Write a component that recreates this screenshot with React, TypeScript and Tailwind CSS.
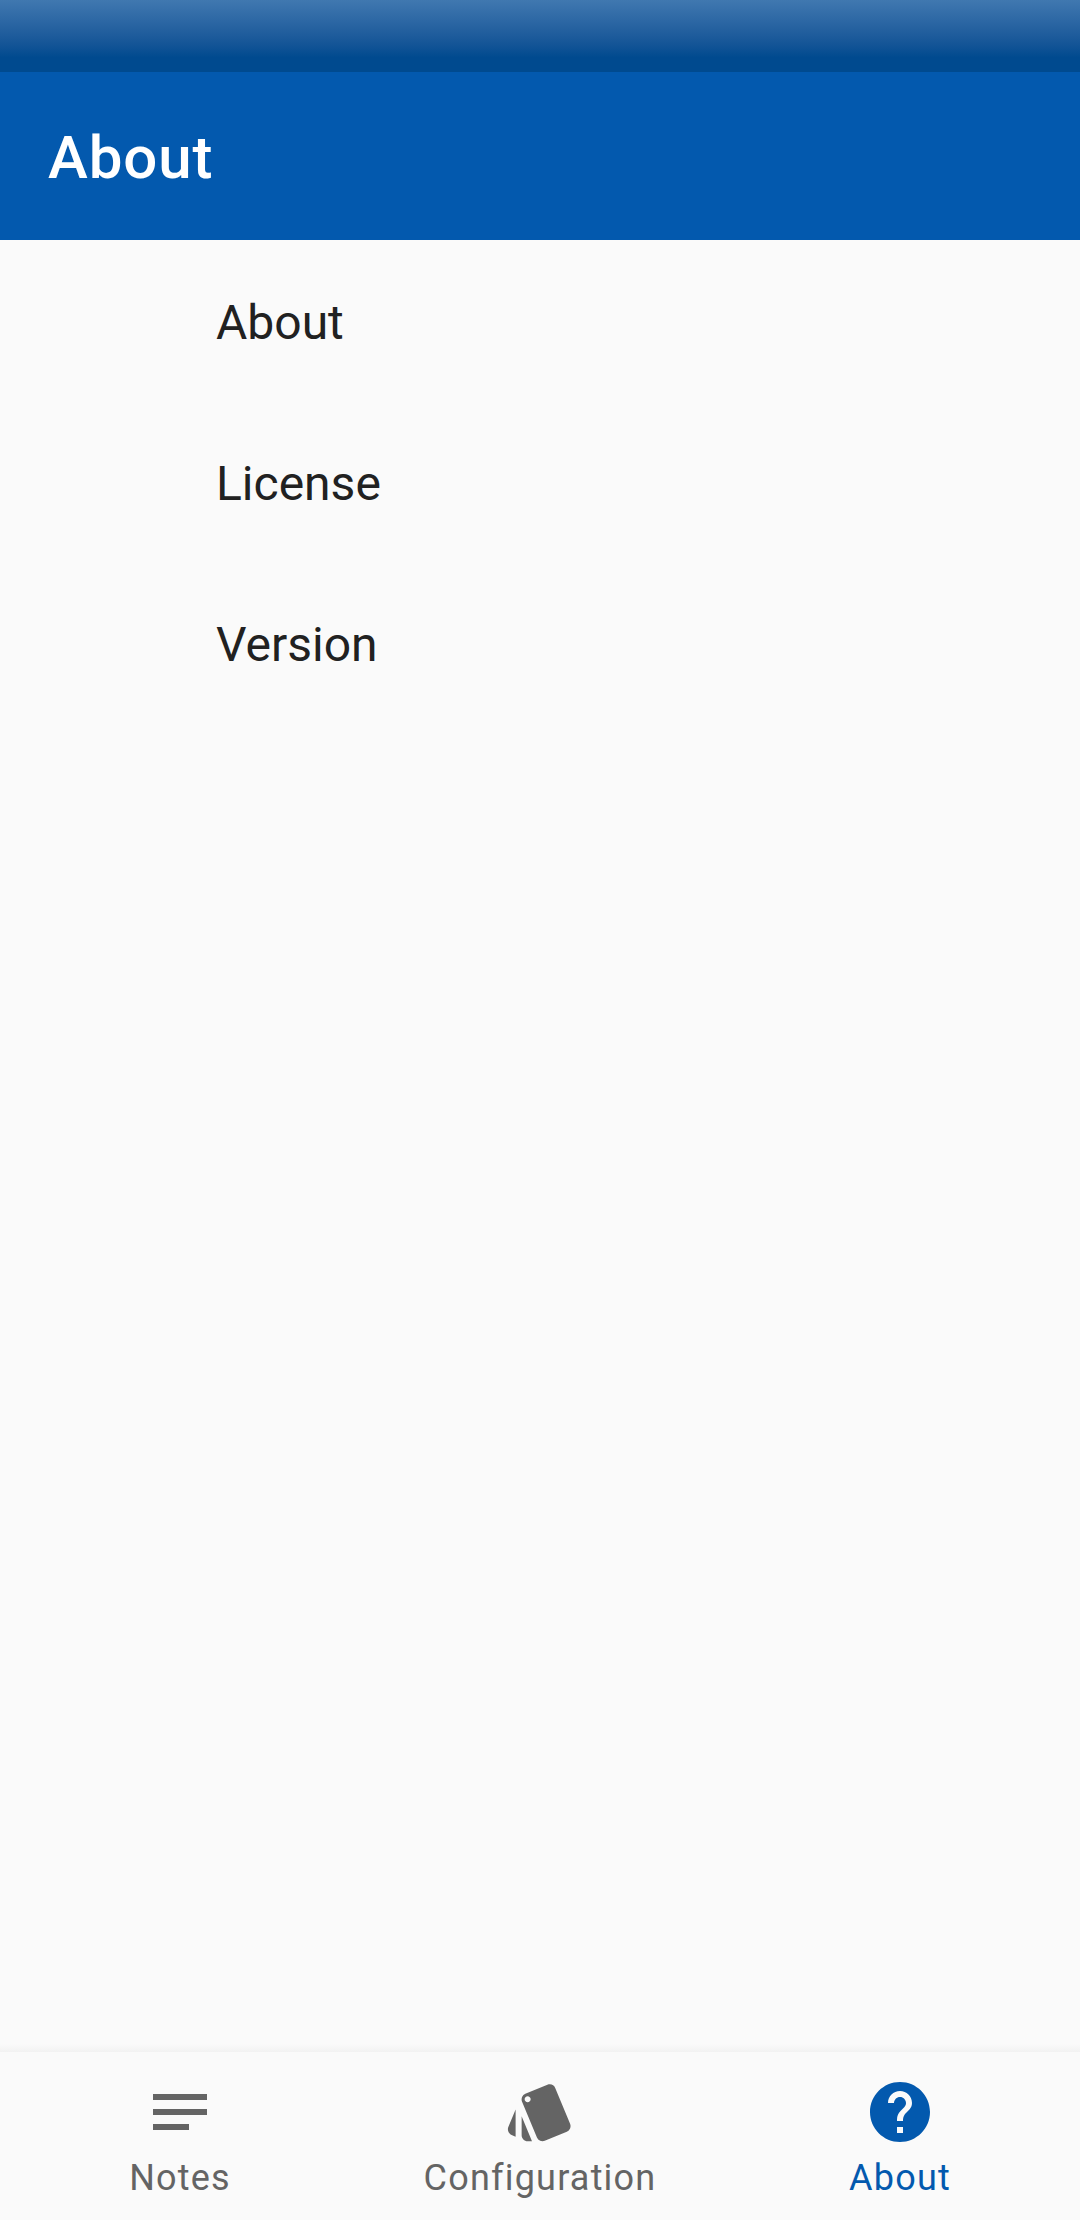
import { MdNotes, MdStyle, MdHelp } from "react-icons/md";

const rows = ["About", "License", "Version"];
const tabs = [
  { label: "Notes", Icon: MdNotes, active: false },
  { label: "Configuration", Icon: MdStyle, active: false },
  { label: "About", Icon: MdHelp, active: true },
];

export default function App() {
  return (
    <div className="flex h-[2220px] w-[1080px] flex-col overflow-hidden bg-[#fafafa] font-[Roboto,sans-serif]">
      <div className="h-[72px] shrink-0 bg-linear-to-b from-[#4078b0] to-[#004a8f] to-80%" />
      <header className="flex h-[168px] shrink-0 items-center bg-[#0359ae] pt-1 pl-12">
        <h1 className="text-[60px] leading-[70px] font-medium tracking-[0.9px] text-white">About</h1>
      </header>
      <main className="flex-1">
        {rows.map((r) => (
          <div key={r} className="flex h-[161px] items-center pt-1 pl-[216px] text-[48px] leading-[56px] text-[#212121]">{r}</div>
        ))}
      </main>
      <div className="h-2 shrink-0 bg-linear-to-b from-[#fafafa] to-[#f2f2f2]" />
      <nav className="grid h-[168px] shrink-0 grid-cols-3">
        {tabs.map(({ label, Icon, active }) => (
          <div key={label} className={`flex flex-col items-center pt-6 ${active ? "text-[#0359ae]" : "text-[#646464]"}`}>
            <Icon size={72} />
            <span className="mt-[9px] text-[36px] leading-[42px] tracking-[1.2px]">{label}</span>
          </div>
        ))}
      </nav>
    </div>
  );
}
